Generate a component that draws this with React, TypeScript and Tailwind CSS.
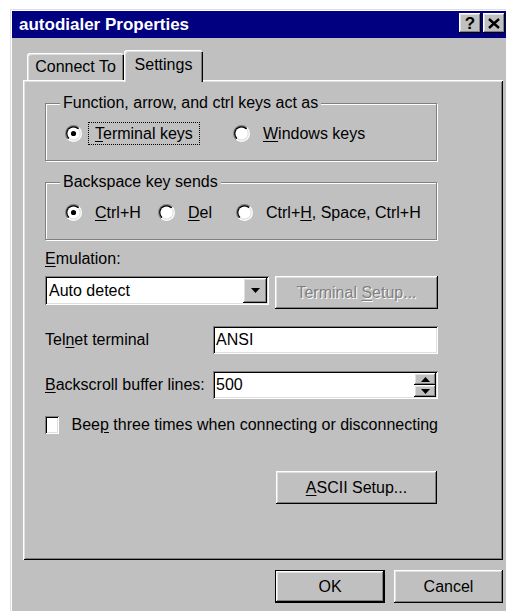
import type { ReactNode } from 'react'

// classic 3D bevels
const raised =
  'shadow-[inset_-1px_-1px_0_#000,inset_1px_1px_0_#fff,inset_-2px_-2px_0_#808080,inset_2px_2px_0_#dfdfdf]'
const sunken =
  'shadow-[inset_1px_1px_0_#808080,inset_-1px_-1px_0_#fff,inset_2px_2px_0_#000,inset_-2px_-2px_0_#dfdfdf]'

const Radio = ({ checked }: { checked?: boolean }) => (
  <svg width="17" height="17" viewBox="0 0 17 17" className="shrink-0">
    <defs>
      <linearGradient id="radioOuter" x1="0" y1="0" x2="1" y2="1">
        <stop offset="0.5" stopColor="#808080" />
        <stop offset="0.5" stopColor="#ffffff" />
      </linearGradient>
      <linearGradient id="radioInner" x1="0" y1="0" x2="1" y2="1">
        <stop offset="0.5" stopColor="#000000" />
        <stop offset="0.5" stopColor="#dfdfdf" />
      </linearGradient>
    </defs>
    <circle cx="8.5" cy="8.5" r="8.5" fill="url(#radioOuter)" />
    <circle cx="8.5" cy="8.5" r="7.3" fill="url(#radioInner)" />
    <circle cx="8.5" cy="8.5" r="6.1" fill="#fff" />
    {checked && <circle cx="8.5" cy="8.5" r="2.6" fill="#000" />}
  </svg>
)

const RadioItem = ({
  checked,
  focused,
  className = '',
  children,
}: {
  checked?: boolean
  focused?: boolean
  className?: string
  children: ReactNode
}) => (
  <div className={`flex items-center ${className}`}>
    <Radio checked={checked} />
    <span
      className={`ml-[6px] px-[6px] border leading-[21px] whitespace-nowrap ${
        focused ? 'border-dotted border-black' : 'border-transparent'
      }`}
    >
      {children}
    </span>
  </div>
)

const Group = ({ label, children }: { label: string; children: ReactNode }) => (
  <fieldset className="w-[392px] border border-[#808080] shadow-[inset_1px_1px_0_#fff,1px_1px_0_#fff]">
    <legend className="ml-[14px] px-[3px] bg-[#c0c0c0] leading-[18px]">{label}</legend>
    <div className="pt-[9px] pb-[15px] pl-[19px]">
      <div className="flex h-[24px] items-center">{children}</div>
    </div>
  </fieldset>
)

const Button = ({ className = '', children }: { className?: string; children: ReactNode }) => (
  <div className={`flex items-center justify-center bg-[#c0c0c0] whitespace-nowrap ${raised} ${className}`}>
    {children}
  </div>
)

const Triangle = ({ up }: { up?: boolean }) => (
  <svg width="9" height="5" viewBox="0 0 9 5">
    <path d={up ? 'M4.5 0L9 5H0z' : 'M0 0h9L4.5 5z'} fill="#000" />
  </svg>
)

const App = () => {
  return (
    <div className="w-[506px] h-[611px] overflow-hidden bg-white font-['Liberation_Sans',Arial,sans-serif] text-[16px] text-black">
      <div className="ml-[10px] mt-[9px] w-[500px] h-[610px] p-[2px] bg-[#c0c0c0] shadow-[inset_1px_1px_0_#dfdfdf,inset_-1px_-1px_0_#000,inset_2px_2px_0_#fff,inset_-2px_-2px_0_#808080]">
        {/* caption */}
        <div className="h-[27px] bg-[#000080] flex items-center pl-[7px] pr-[3px]">
          <span className="text-white font-bold text-[17px] leading-none">autodialer Properties</span>
          <div className="ml-auto self-start mt-[2px] flex gap-[2px]">
            <div className={`w-[22px] h-[20px] bg-[#c0c0c0] flex items-center justify-center font-bold text-[17px] leading-none ${raised}`}>
              ?
            </div>
            <div className={`w-[22px] h-[20px] bg-[#c0c0c0] flex items-center justify-center ${raised}`}>
              <svg width="12" height="11" viewBox="0 0 12 11">
                <path d="M1 1l10 9M11 1L1 10" stroke="#000" strokeWidth="2.4" />
              </svg>
            </div>
          </div>
        </div>

        {/* tabs */}
        <div className="mt-[12px] ml-[11px] flex items-end h-[30px]">
          <div className="ml-[4px] w-[97px] h-[27px] rounded-t-[3px] flex items-center justify-center shadow-[inset_1px_1px_0_#fff,inset_2px_2px_0_#dfdfdf,inset_-1px_0_0_#000,inset_-2px_0_0_#808080]">
            Connect To
          </div>
          <div className="relative z-10 -mb-[2px] w-[79px] h-[32px] pb-[2px] rounded-t-[3px] bg-[#c0c0c0] flex items-center justify-center shadow-[inset_1px_1px_0_#fff,inset_2px_2px_0_#dfdfdf,inset_-1px_0_0_#000,inset_-2px_0_0_#808080]">
            Settings
          </div>
        </div>

        {/* tab page */}
        <div className="ml-[11px] w-[480px] h-[480px] pt-[14px] pl-[22px] bg-[#c0c0c0] shadow-[inset_1px_1px_0_#fff,inset_-1px_-1px_0_#000,inset_2px_2px_0_#dfdfdf,inset_-2px_-2px_0_#808080]">
          <div className="w-[393px]">
            <Group label="Function, arrow, and ctrl keys act as">
              <RadioItem checked focused className="w-[168px]">
                <u className="underline-offset-[2px]">T</u>erminal keys
              </RadioItem>
              <RadioItem>
                <u className="underline-offset-[2px]">W</u>indows keys
              </RadioItem>
            </Group>

            <div className="mt-[12px]">
              <Group label="Backspace key sends">
                <RadioItem checked className="w-[93px]">
                  <u className="underline-offset-[2px]">C</u>trl+H
                </RadioItem>
                <RadioItem className="w-[78px]">
                  <u className="underline-offset-[2px]">D</u>el
                </RadioItem>
                <RadioItem>
                  Ctrl+<u className="underline-offset-[2px]">H</u>, Space, Ctrl+H
                </RadioItem>
              </Group>
            </div>

            <div className="mt-[10px] leading-[18px]">
              <u className="underline-offset-[2px]">E</u>mulation:
            </div>

            <div className="mt-[8px] flex items-start gap-[6px]">
              <div className={`w-[224px] h-[29px] bg-white flex ${sunken}`}>
                <span className="pl-[4px] self-center">Auto detect</span>
                <div className={`ml-auto my-[2px] mr-[2px] w-[24px] bg-[#c0c0c0] flex items-center justify-center ${raised}`}>
                  <Triangle />
                </div>
              </div>
              <Button className="w-[163px] h-[33px] text-[#808080] [text-shadow:1px_1px_0_#fff]">
                <span>
                  Terminal <u className="underline-offset-[2px]">S</u>etup...
                </span>
              </Button>
            </div>

            <div className="mt-[17px] flex items-center h-[28px]">
              <span className="w-[168px]">
                Tel<u className="underline-offset-[2px]">n</u>et terminal
              </span>
              <div className={`w-[225px] h-[28px] pl-[3px] bg-white flex items-center ${sunken}`}>ANSI</div>
            </div>

            <div className="mt-[17px] flex items-center h-[28px]">
              <span className="w-[168px]">
                <u className="underline-offset-[2px]">B</u>ackscroll buffer lines:
              </span>
              <div className={`w-[225px] h-[28px] bg-white flex ${sunken}`}>
                <span className="pl-[3px] self-center">500</span>
                <div className="ml-auto my-[2px] mr-[2px] w-[22px] flex flex-col">
                  <div className={`flex-1 bg-[#c0c0c0] flex items-center justify-center ${raised}`}>
                    <Triangle up />
                  </div>
                  <div className={`flex-1 bg-[#c0c0c0] flex items-center justify-center ${raised}`}>
                    <Triangle />
                  </div>
                </div>
              </div>
            </div>

            <div className="mt-[17px] flex items-center h-[18px]">
              <div className={`w-[19px] h-[18px] bg-white ${sunken}`} />
              <span className="ml-[13px] whitespace-nowrap">
                Bee<u className="underline-offset-[2px]">p</u> three times when connecting or disconnecting
              </span>
            </div>

            <div className="mt-[37px] flex justify-end">
              <Button className="w-[161px] h-[33px] mr-[1px]">
                <span>
                  <u className="underline-offset-[2px]">A</u>SCII Setup...
                </span>
              </Button>
            </div>
          </div>
        </div>

        {/* dialog buttons */}
        <div className="mt-[10px] ml-[11px] w-[480px] flex justify-end gap-[9px]">
          <div className={`w-[110px] h-[33px] border border-black bg-[#c0c0c0] flex items-center justify-center ${raised}`}>
            OK
          </div>
          <Button className="w-[109px] h-[33px]">Cancel</Button>
        </div>
      </div>
    </div>
  )
}

export default App
